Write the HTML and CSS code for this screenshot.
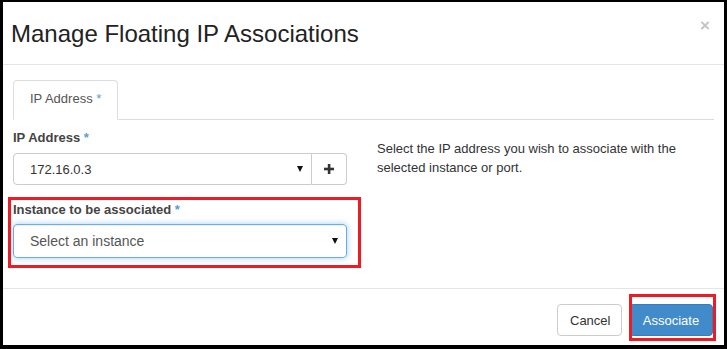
FILE: index.html
```html
<!DOCTYPE html>
<html lang="en">
<head>
    <meta charset="UTF-8">
    <title>Manage Floating IP Associations</title>
    <link rel="stylesheet" href="styles.css">
</head>
<body>
    <div class="modal">
        <div class="modal-header">
            <h4 class="modal-title">Manage Floating IP Associations</h4>
            <span class="close">&times;</span>
        </div>
        <div class="modal-body">
            <ul class="nav-tabs">
                <li class="tab active">IP Address <span class="req">*</span></li>
            </ul>
            <div class="tab-content">
                <div class="left-col">
                    <div class="form-group">
                        <label>IP Address <span class="req">*</span></label>
                        <div class="input-group">
                            <div class="select">
                                <span>172.16.0.3</span>
                                <span class="caret"></span>
                            </div>
                            <div class="add-btn">
                                <svg width="10" height="10" viewBox="0 0 10 10"><rect x="3.8" y="0" width="2.6" height="10" fill="#333"/><rect x="0" y="3.7" width="10" height="2.6" fill="#333"/></svg>
                            </div>
                        </div>
                    </div>
                    <div class="form-group second">
                        <label>Instance to be associated <span class="req">*</span></label>
                        <div class="select focus">
                            <span>Select an instance</span>
                            <span class="caret"></span>
                        </div>
                    </div>
                </div>
                <div class="right-col">
                    <p>Select the IP address you wish to associate with the selected instance or port.</p>
                </div>
            </div>
        </div>
        <div class="modal-footer">
            <button class="btn btn-default">Cancel</button>
            <button class="btn btn-primary">Associate</button>
        </div>
        <div class="mark mark-instance"></div>
        <div class="mark mark-associate"></div>
    </div>
</body>
</html>
```

FILE: styles.css
```css
body {
    margin: 0;
    font-family: 'Liberation Sans', Arial, sans-serif;
    font-size: 13px;
    color: #333;
    background: #fff;
}
.modal {
    position: relative;
    width: 727px;
    height: 349px;
    box-sizing: border-box;
    border-style: solid;
    border-color: #000;
    border-width: 2px 3px 4px 3px;
    background: #fff;
    display: flex;
    flex-direction: column;
}
.modal-header {
    display: flex;
    justify-content: space-between;
    align-items: flex-start;
    height: 63px;
    box-sizing: border-box;
    padding: 19px 14px 0 8px;
    border-bottom: 1px solid #e5e5e5;
}
.modal-title {
    margin: 0;
    font-size: 24px;
    font-weight: normal;
    line-height: 26px;
    color: #222;
}
.close {
    font-size: 17px;
    font-weight: bold;
    line-height: 14px;
    color: #c4c4c4;
    margin-top: -2px;
}
.modal-body {
    padding: 15px 10px 0 10px;
    height: 224px;
    box-sizing: border-box;
    border-bottom: 1px solid #e5e5e5;
}
.nav-tabs {
    list-style: none;
    margin: 0;
    padding: 0;
    display: flex;
    border-bottom: 1px solid #ddd;
}
.tab {
    padding: 9px 16px 11px 16px;
    line-height: 18px;
    white-space: nowrap;
    color: #555;
    border: 1px solid #ddd;
    border-bottom-color: #fff;
    border-radius: 4px 4px 0 0;
    margin-bottom: -1px;
}
.req {
    color: #5c9bd6;
}
.tab-content {
    display: grid;
    grid-template-columns: 334px 1fr;
    column-gap: 30px;
}
.form-group label {
    display: block;
    font-weight: bold;
    line-height: 18px;
    margin-top: 9px;
    margin-bottom: 6px;
    color: #444;
}
.form-group.second label {
    margin-top: 16px;
    margin-bottom: 5px;
}
.input-group {
    display: flex;
}
.select {
    flex: 1;
    display: flex;
    align-items: center;
    justify-content: space-between;
    height: 32px;
    box-sizing: border-box;
    padding: 0 8px 0 16px;
    border: 1px solid #ccc;
    border-radius: 4px;
    color: #333;
}
.input-group .select {
    border-radius: 4px 0 0 4px;
}
.select.focus {
    height: 34px;
    font-size: 14px;
    color: #555;
    border-color: #66afe9;
    box-shadow: inset 0 1px 1px rgba(0, 0, 0, 0.075), 0 0 6px rgba(102, 175, 233, 0.6);
}
.caret {
    width: 0;
    height: 0;
    border-left: 3px solid transparent;
    border-right: 3px solid transparent;
    border-top: 6px solid #111;
}
.add-btn {
    width: 35px;
    height: 32px;
    box-sizing: border-box;
    border: 1px solid #ccc;
    border-left: none;
    border-radius: 0 4px 4px 0;
    display: flex;
    align-items: center;
    justify-content: center;
}
.right-col p {
    margin: 19px 0 0 0;
    line-height: 19px;
}
.modal-footer {
    display: flex;
    justify-content: flex-end;
    gap: 7px;
    padding: 15px 11px 0 0;
}
.btn {
    font-family: 'Liberation Sans', Arial, sans-serif;
    font-size: 13px;
    height: 32px;
    border-radius: 4px;
    padding: 0 12px;
    border: 1px solid #ccc;
    background: #fff;
    color: #333;
}
.btn-default {
    width: 65px;
}
.btn-primary {
    width: 84px;
    background: #428bca;
    border-color: #357ebd;
    color: #fff;
}
.mark {
    position: absolute;
    border: 3px solid #ed1c24;
    box-sizing: border-box;
}
.mark-instance {
    left: 5px;
    top: 195px;
    width: 353px;
    height: 71px;
}
.mark-associate {
    left: 626px;
    top: 292px;
    width: 87px;
    height: 47px;
}
```
